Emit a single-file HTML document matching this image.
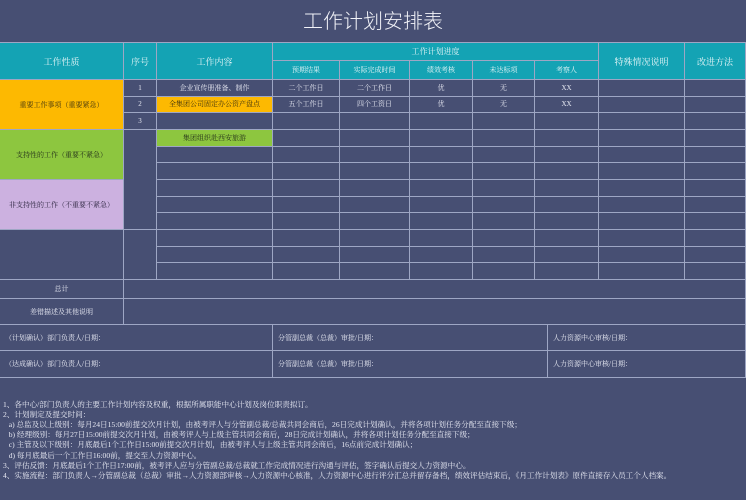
<!DOCTYPE html>
<html><head><meta charset="utf-8"><style>
body{margin:0;width:746px;height:500px;background:#474f73;position:relative;overflow:hidden;font-family:"Liberation Serif","Noto Serif CJK SC",serif;color:#e8eaf4}
.c{position:absolute;box-sizing:border-box;border-right:1px solid #9ea6c4;border-bottom:1px solid #9ea6c4;display:flex;align-items:center;justify-content:center;font-size:7px;white-space:nowrap}
.h{background:#14a3b4;font-size:9px;color:#e6f6f8}
.t{position:absolute;left:0;top:0;width:746px;height:43px;border-bottom:1px solid #9ea6c4;box-sizing:border-box;text-align:center;line-height:44px;font-size:20px;color:#f2f3f8;font-family:"Liberation Sans","Noto Sans CJK SC",sans-serif;font-weight:300}
.n{position:absolute;left:3px;font-size:7.6px;white-space:nowrap}
.l{justify-content:flex-start;padding-left:5px}
</style></head><body>
<div class="t">工作计划安排表</div>
<div id="g"></div>
<script>
var g='';function C(x,y,w,h,t,cl,st){g+='<div class="c '+(cl||'')+'" style="left:'+x+'px;top:'+y+'px;width:'+w+'px;height:'+h+'px;'+(st||'')+'">'+(t||'')+'</div>';}
var X=[0,124,157,273,340,410,473,535,599,685,746];
C(0,43,124,37,'工作性质','h');C(124,43,33,37,'序号','h');C(157,43,116,37,'工作内容','h');
C(273,43,326,18,'工作计划进度','h','font-size:8px');
var sub=['预期结果','实际完成时间','绩效考核','未达标项','考察人'];
for(var i=0;i<5;i++)C(X[3+i],61,X[4+i]-X[3+i],19,sub[i],'h','font-size:7px');
C(599,43,86,37,'特殊情况说明','h');C(685,43,61,37,'改进方法','h');
var rh=200/12;
C(0,80,124,50,'重要工作事项（重要紧急）','','background:#fdb901;color:#3a3010');
C(0,130,124,50,'支持性的工作（重要不紧急）','','background:#8dc63f;color:#24301a');
C(0,180,124,50,'非支持性的工作（不重要不紧急）','','background:#ccb1e0;color:#2d2640');
C(0,230,124,50,'');
C(124,80,33,rh,'1');C(124,80+rh,33,rh,'2');C(124,80+2*rh,33,rh,'3');C(124,130,33,100,'');C(124,230,33,50,'');
var d=[['企业宣传册准备、制作','二个工作日','二个工作日','优','无','XX'],['全集团公司固定办公资产盘点','五个工作日','四个工资日','优','无','XX']];
for(var r=0;r<12;r++){var y=80+r*rh;for(var c=2;c<10;c++){var t='',st='';
if(r<2&&c<8)t=d[r][c-2];
if(r==1&&c==2)st='background:#fdb901;color:#3a3010';
if(r==3&&c==2){t='集团组织赴西安旅游';st='background:#8dc63f;color:#24301a';}
C(X[c],y,X[c+1]-X[c],rh,t,'',st);}}
C(0,280,124,19,'总计');C(124,280,622,19,'');
C(0,299,124,26,'差错描述及其他说明');C(124,299,622,26,'');
C(0,325,273,26,'（计划确认）部门负责人/日期：','l');C(273,325,275,26,'分管副总裁（总裁）审批/日期：','l');C(548,325,198,26,'人力资源中心审核/日期：','l');
C(0,351,273,27,'（达成确认）部门负责人/日期：','l');C(273,351,275,27,'分管副总裁（总裁）审批/日期：','l');C(548,351,198,27,'人力资源中心审核/日期：','l');
var N=['1、各中心/部门负责人的主要工作计划内容及权重，根据所属职能中心计划及岗位职责拟订。','2、计划制定及提交时间：','&nbsp;&nbsp;&nbsp;a) 总监及以上级别：每月24日15:00前提交次月计划，由被考评人与分管副总裁/总裁共同会商后，26日完成计划确认，并将各项计划任务分配至直接下级；','&nbsp;&nbsp;&nbsp;b) 经理级别：每月27日15:00前提交次月计划，由被考评人与上级主管共同会商后，28日完成计划确认，并将各项计划任务分配至直接下级；','&nbsp;&nbsp;&nbsp;c) 主管及以下级别：月底最后1个工作日15:00前提交次月计划，由被考评人与上级主管共同会商后，16点前完成计划确认；','&nbsp;&nbsp;&nbsp;d) 每月底最后一个工作日16:00前，提交至人力资源中心。','3、评估反馈：月底最后1个工作日17:00前，被考评人应与分管副总裁/总裁就工作完成情况进行沟通与评估，签字确认后提交人力资源中心。','4、实施流程：部门负责人→分管副总裁（总裁）审批→人力资源部审核→人力资源中心核准，人力资源中心进行评分汇总并留存备档，绩效评估结束后，《月工作计划表》原件直接存入员工个人档案。'];
for(var i=0;i<N.length;i++)g+='<div class="n" style="top:'+(399+i*10.1)+'px">'+N[i]+'</div>';
document.getElementById('g').innerHTML=g;
</script>
</body></html>
